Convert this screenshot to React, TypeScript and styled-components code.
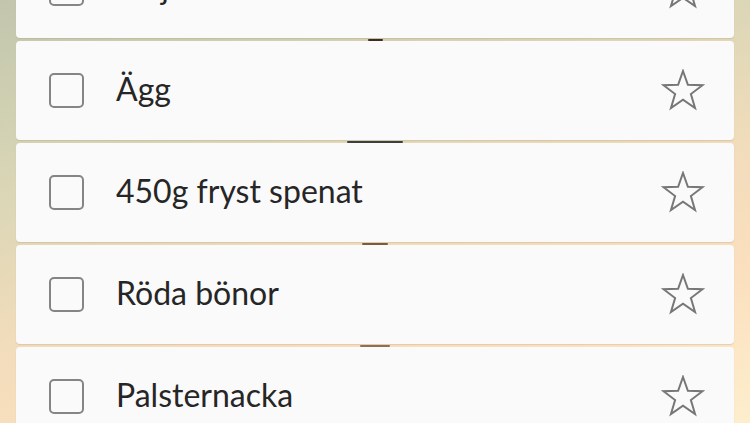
import styled, { createGlobalStyle } from "styled-components";

const GlobalStyle = createGlobalStyle`
  html, body {
    margin: 0;
    padding: 0;
    height: 100%;
    overflow: hidden;
  }
  body {
    font-family: Lato, "Noto Sans", sans-serif;
    background: linear-gradient(165deg, #c2c6ad 0%, #d9d6b6 30%, #f1dcbb 55%, #fbdfbe 75%, #fdeecd 100%);
  }
`;

const Screen = styled.div`
  width: 750px;
  height: 423px;
  overflow: hidden;
`;

const List = styled.div`
  display: flex;
  flex-direction: column;
  padding: 0 16px;
  margin-top: -61px;
`;

const Card = styled.div`
  height: 99px;
  display: flex;
  align-items: center;
  padding: 0 29px 0 33px;
  background-color: #fafafa;
  border-radius: 4px;
  box-shadow: 0 1px 1px rgba(160, 140, 110, 0.25);
`;

const Checkbox = styled.div`
  width: 31px;
  height: 31px;
  flex-shrink: 0;
  border: 2px solid #858585;
  border-radius: 5px;
`;

const Label = styled.span`
  flex: 1;
  margin-left: 32px;
  padding-bottom: 5px;
  font-size: 32px;
  color: #262626;
`;

const StarIcon = styled.svg`
  width: 44px;
  height: 44px;
  flex-shrink: 0;
`;

const Seam = styled.div`
  height: 3px;
  display: flex;
  justify-content: center;
  align-items: center;
`;

const Notch = styled.div<{ $w: number; $c: string }>`
  width: ${(p) => p.$w}px;
  height: 2px;
  border-radius: 1px;
  background-color: ${(p) => p.$c};
`;

const Star = () => (
  <StarIcon viewBox="0 0 44 44">
    <polygon
      points="22,2 26.88,15.79 41.5,16.17 29.89,25.06 34.05,39.08 22,30.8 9.95,39.08 14.11,25.06 2.5,16.17 17.12,15.79"
      fill="none"
      stroke="#777777"
      strokeWidth="2"
      strokeLinejoin="miter"
    />
  </StarIcon>
);

const items = [
  { name: "Majs", notch: { w: 15, c: "#3a2c22" } },
  { name: "Ägg", notch: { w: 56, c: "#3d3f3c" } },
  { name: "450g fryst spenat", notch: { w: 26, c: "#7a5a42" } },
  { name: "Röda bönor", notch: { w: 30, c: "#8a7055" } },
  { name: "Palsternacka", notch: null },
];

const App = () => {
  return (
    <Screen>
      <GlobalStyle />
      <List>
        {items.map((item) => (
          <div key={item.name}>
            <Card>
              <Checkbox />
              <Label>{item.name}</Label>
              <Star />
            </Card>
            {item.notch && (
              <Seam>
                <Notch $w={item.notch.w} $c={item.notch.c} />
              </Seam>
            )}
          </div>
        ))}
      </List>
    </Screen>
  );
};

export default App;
